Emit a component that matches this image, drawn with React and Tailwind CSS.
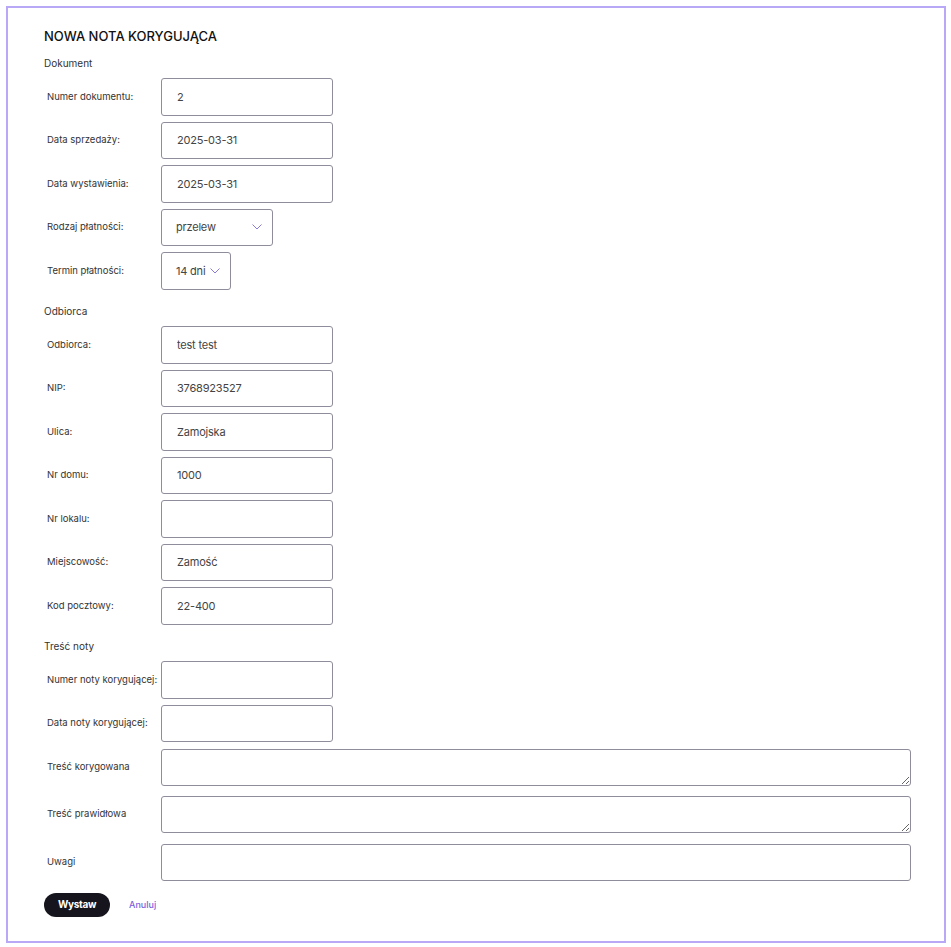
import React from "react";

const font = { fontFamily: "Inter, 'Noto Sans', sans-serif" };

function Chevron() {
  return (
    <svg width="10" height="6" viewBox="0 0 10 6" fill="none" className="shrink-0">
      <path d="M0.5 0.5L5 5L9.5 0.5" stroke="#8b7bd3" strokeWidth="1" />
    </svg>
  );
}

function Row({ label, children }) {
  return (
    <div className="flex items-center">
      <label className="w-[117px] shrink-0 whitespace-nowrap pl-[3px] text-[9.5px] text-[#333]">{label}</label>
      {children}
    </div>
  );
}

function TextInput({ value = "" }) {
  return (
    <input
      defaultValue={value}
      className="h-[37.5px] w-[172px] rounded-[3px] border border-[#8f8c9c] bg-white px-[15px] text-[11px] tracking-[-0.2px] text-[#444] outline-none"
    />
  );
}

function Select({ value, width }) {
  return (
    <div
      className={`flex h-[37.5px] items-center justify-between rounded-[3px] border border-[#8f8c9c] bg-white pl-[14px] pr-[10px] text-[11px] tracking-[-0.2px] text-[#444] ${width}`}
    >
      <span>{value}</span>
      <Chevron />
    </div>
  );
}

function Section({ title, className = "" }) {
  return <div className={`text-[10px] leading-[16px] text-[#333] ${className}`}>{title}</div>;
}

const areaCls =
  "block h-[37px] min-w-0 flex-1 rounded-[3px] border border-[#8f8c9c] bg-white px-[15px] text-[11px] outline-none";

export default function App() {
  return (
    <div className="bg-white pl-[6px] pt-[6px] pr-[5px] pb-[5px]" style={font}>
      <div className="border-2 border-[#b8a8f5] pl-[36px] pr-[33px] pt-[19px] pb-[24px]">
        <h1 className="text-[13px] font-medium leading-[18px] text-[#111]">NOWA NOTA KORYGUJĄCA</h1>

        <Section title="Dokument" className="mt-[10px] mb-[7px]" />
        <div className="flex flex-col gap-[6px]">
          <Row label="Numer dokumentu:"><TextInput value="2" /></Row>
          <Row label="Data sprzedaży:"><TextInput value="2025-03-31" /></Row>
          <Row label="Data wystawienia:"><TextInput value="2025-03-31" /></Row>
          <Row label="Rodzaj płatności:"><Select value="przelew" width="w-[112px]" /></Row>
          <Row label="Termin płatności:"><Select value="14 dni" width="w-[70px]" /></Row>
        </div>

        <Section title="Odbiorca" className="mt-[13.5px] mb-[7px]" />
        <div className="flex flex-col gap-[6px]">
          <Row label="Odbiorca:"><TextInput value="test test" /></Row>
          <Row label="NIP:"><TextInput value="3768923527" /></Row>
          <Row label="Ulica:"><TextInput value="Zamojska" /></Row>
          <Row label="Nr domu:"><TextInput value="1000" /></Row>
          <Row label="Nr lokalu:"><TextInput /></Row>
          <Row label="Miejscowość:"><TextInput value="Zamość" /></Row>
          <Row label="Kod pocztowy:"><TextInput value="22-400" /></Row>
        </div>

        <Section title="Treść noty" className="mt-[13.5px] mb-[7px]" />
        <div className="flex flex-col gap-[6px]">
          <Row label="Numer noty korygującej:"><TextInput /></Row>
          <Row label="Data noty korygującej:"><TextInput /></Row>
        </div>
        <div className="mt-[6.5px] flex flex-col gap-[10.5px]">
          <Row label="Treść korygowana">
            <textarea className={areaCls} />
          </Row>
          <Row label="Treść prawidłowa">
            <textarea className={areaCls} />
          </Row>
          <Row label="Uwagi">
            <input className={areaCls} />
          </Row>
        </div>

        <div className="mt-[12px] flex items-center gap-[19px]">
          <button className="h-[24px] w-[66px] rounded-full bg-[#16151d] text-[10px] font-bold tracking-[-0.3px] text-white">
            Wystaw
          </button>
          <a href="#" className="text-[9px] font-medium text-[#7b5fdc]">Anuluj</a>
        </div>
      </div>
    </div>
  );
}
